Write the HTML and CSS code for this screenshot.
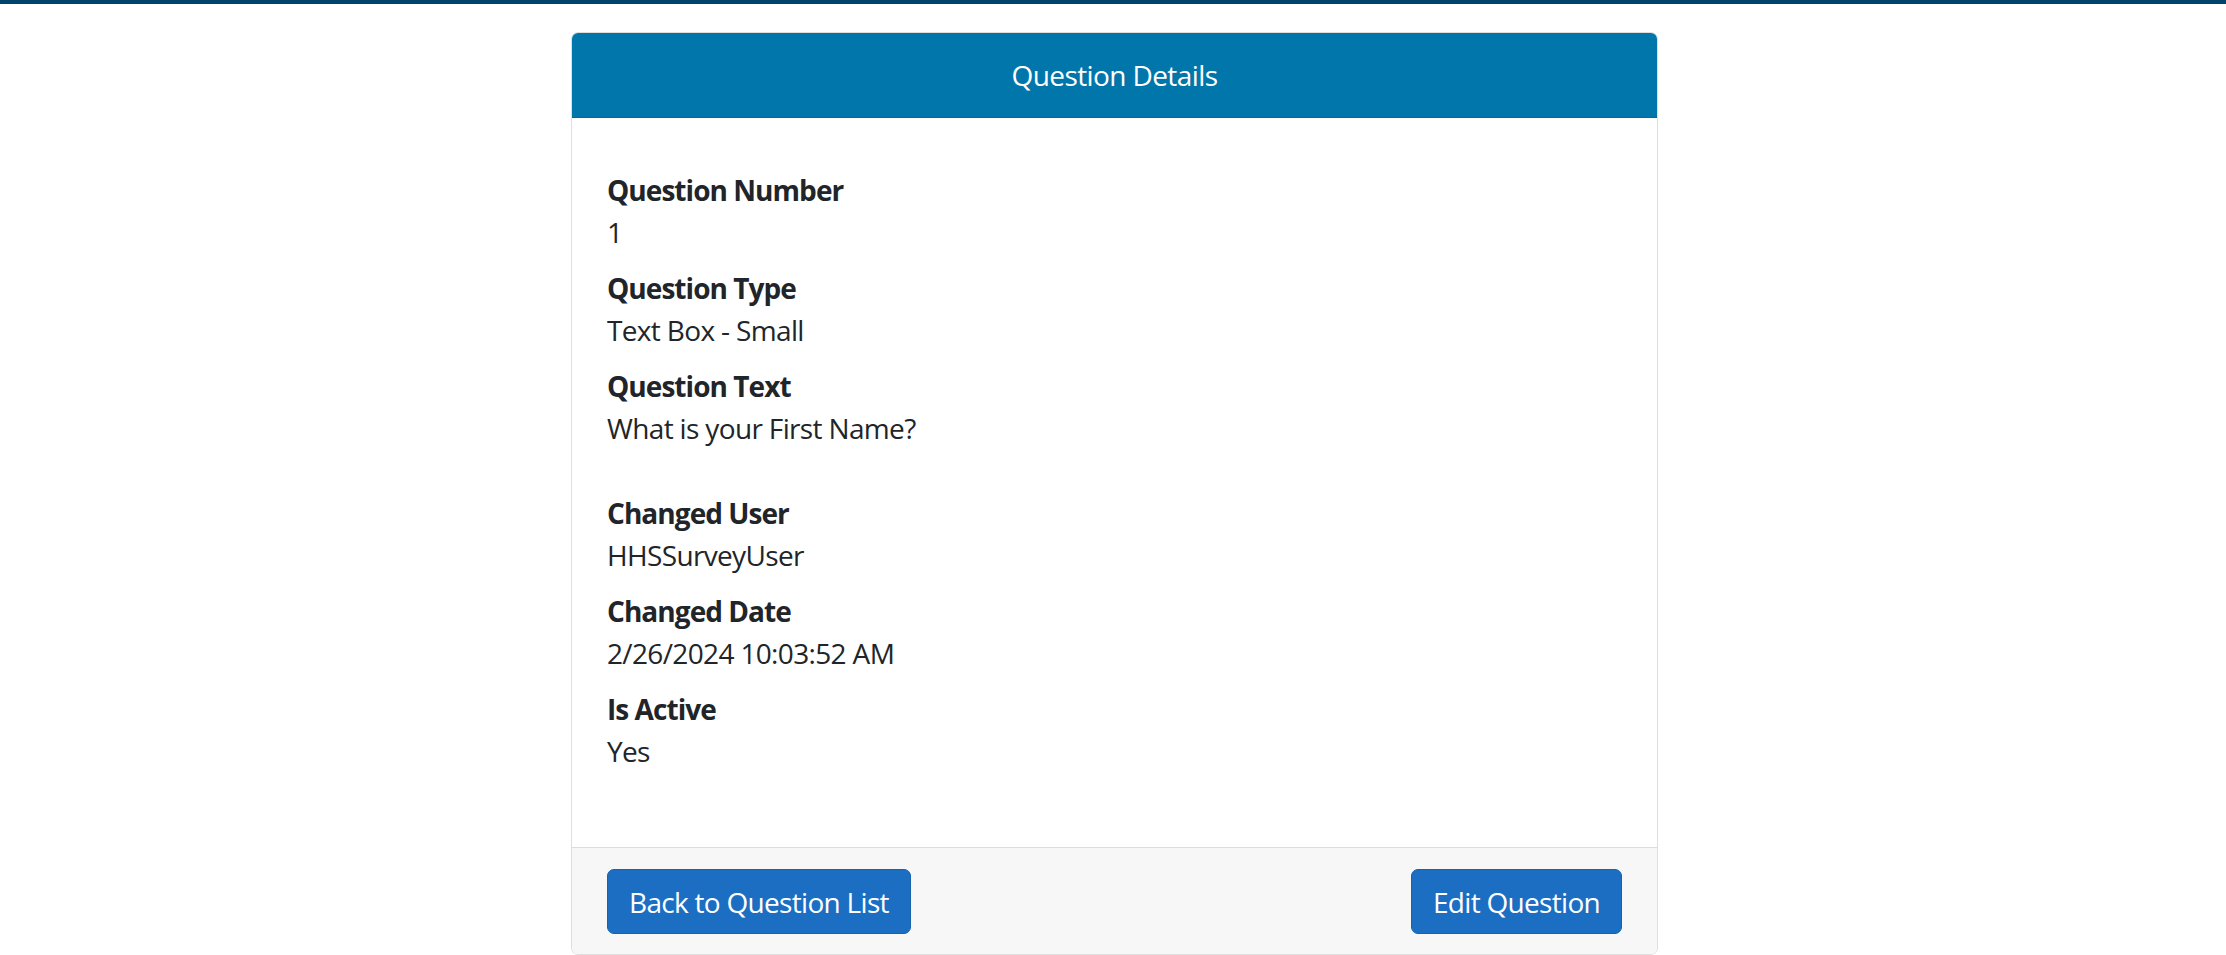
FILE: index.html
```html
<!DOCTYPE html>
<html lang="en">
<head>
<meta charset="utf-8">
<title>Question Details</title>
<link rel="stylesheet" href="styles.css">
</head>
<body>
<div class="topbar"></div>
<main class="page">
  <section class="card">
    <header class="card-header">Question Details</header>
    <div class="card-body">
      <dl class="details">
        <dt>Question Number</dt>
        <dd>1</dd>
        <dt>Question Type</dt>
        <dd>Text Box - Small</dd>
        <dt>Question Text</dt>
        <dd>What is your First Name?</dd>
      </dl>
      <dl class="details">
        <dt>Changed User</dt>
        <dd>HHSSurveyUser</dd>
        <dt>Changed Date</dt>
        <dd>2/26/2024 10:03:52 AM</dd>
        <dt>Is Active</dt>
        <dd>Yes</dd>
      </dl>
    </div>
    <div class="card-footer">
      <a class="btn" href="#">Back to Question List</a>
      <a class="btn" href="#">Edit Question</a>
    </div>
  </section>
</main>
<footer class="site-footer"></footer>
</body>
</html>
```

FILE: styles.css
```css
html, body {
  margin: 0;
  padding: 0;
}

body {
  font-family: "Open Sans", "Noto Sans", "Liberation Sans", sans-serif;
  font-size: 28px;
  line-height: 42px;
  color: #212529;
  background: #ffffff;
}

.topbar {
  height: 4px;
  background: #02436c;
}

.page {
  display: flex;
  justify-content: center;
  padding: 28px 0 0 3px;
}

.card {
  width: 1087px;
  box-sizing: border-box;
  border: 1px solid #dfdfdf;
  border-radius: 7px;
  overflow: hidden;
  background: #ffffff;
}

.card-header {
  background: #0176ab;
  color: #ffffff;
  text-align: center;
  padding: 21px 35px;
  border-bottom: 1px solid #016a9a;
  letter-spacing: -0.6px;
}

.card-body {
  padding: 51px 35px 75px;
}

.details {
  margin: 0 0 43px;
}

.details:last-child {
  margin-bottom: 0;
}

.details dt {
  font-weight: 700;
  letter-spacing: -0.95px;
}

.details dd {
  margin: 0 0 14px;
  letter-spacing: -0.65px;
}

.details dd:last-child {
  margin-bottom: 0;
}

.card-footer {
  display: flex;
  justify-content: space-between;
  align-items: center;
  background: #f7f7f7;
  border-top: 1px solid #dcdcdc;
  padding: 21px 35px 20px;
}

.btn {
  display: inline-block;
  background: #1b6ec2;
  border: 1px solid #1861ac;
  border-radius: 7px;
  color: #ffffff;
  text-decoration: none;
  padding: 11px 21px 10px;
  line-height: 42px;
  letter-spacing: -0.7px;
}

.site-footer {
  border-top: 1px solid #e5e5e5;
  height: 60px;
}
```
